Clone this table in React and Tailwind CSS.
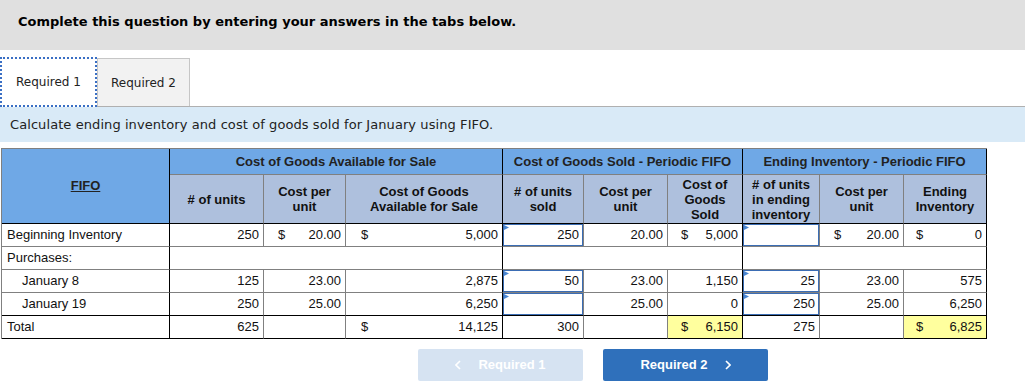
import React from "react";

function Cell({ r = "g", b = "g", className = "", children }) {
  const rc = r === "k" ? "border-r-black" : "border-r-[#808080]";
  const bc = b === "k" ? "border-b-black" : "border-b-[#808080]";
  return (
    <div className={`border-r border-b ${rc} ${bc} ${className}`}>{children}</div>
  );
}

function Tri() {
  return (
    <svg className="absolute left-0 top-0" width="6" height="6" viewBox="0 0 6 6">
      <polygon points="0,0 5,2.5 0,5" fill="#4a86d1" />
    </svg>
  );
}

function InputBox({ value }) {
  return (
    <div className="relative h-full w-full border border-[#3b6db4] flex items-center justify-end pr-[3px]">
      <Tri />
      {value}
    </div>
  );
}

function Money({ value, pl = "pl-[14px]" }) {
  return (
    <div className={`h-full flex items-center justify-between ${pl} pr-[4px]`}>
      <span>$</span>
      <span>{value}</span>
    </div>
  );
}

function Num({ value }) {
  return <div className="h-full flex items-center justify-end pr-[4px]">{value}</div>;
}

function Label({ children, indent }) {
  return (
    <div className={`h-full flex items-center ${indent ? "pl-[20px]" : "pl-[5px]"}`}>{children}</div>
  );
}

function H2({ children, r = "g" }) {
  return (
    <Cell r={r} b="k" className="bg-[#aec0dd] flex items-center justify-center text-center font-bold leading-[15px]">
      <div>{children}</div>
    </Cell>
  );
}

export default function App() {
  return (
    <div className="w-[1025px] h-[391px] bg-white overflow-hidden">
      <div
        className="h-[50px] bg-[#e0e0e0] pl-[18px] pb-[7px] flex items-center text-[13px] font-bold text-black"
        style={{ fontFamily: '"DejaVu Sans", Verdana, sans-serif' }}
      >
        Complete this question by entering your answers in the tabs below.
      </div>

      <div
        className="mt-[7px] flex h-[49px] items-start text-[12px] text-[#222]"
        style={{ fontFamily: '"DejaVu Sans", Verdana, sans-serif' }}
      >
        <div className="relative z-10 h-[50px] w-[97px] bg-white border-2 border-dotted border-[#3a6fc4] flex items-center justify-center">
          Required 1
        </div>
        <div className="mt-px h-[48px] w-[93px] bg-[#f2f2f2] border border-b-0 border-[#c6c6c6] flex items-center justify-center">
          Required 2
        </div>
      </div>

      <div
        className="h-[36px] border-t border-[#b0b0b0] bg-[#d9eaf7] pl-[10px] flex items-center text-[13px] tracking-[0.08px] text-[#222]"
        style={{ fontFamily: '"DejaVu Sans", Verdana, sans-serif' }}
      >
        Calculate ending inventory and cost of goods sold for January using FIFO.
      </div>

      <div
        className="mt-[6px] ml-px w-fit border-l border-t border-[#808080] grid grid-cols-[168px_94px_82px_157px_81px_84px_75px_77px_84px_83px] grid-rows-[26px_49px_23px_23px_23px_23px_23px] text-[13px] text-[#111]"
        style={{ fontFamily: '"Liberation Sans", Arial, sans-serif' }}
      >
        {/* header row 1 */}
        <Cell r="k" b="k" className="row-span-2 bg-[#6fa8e6] flex items-center justify-center font-bold text-[#222]">
          <span className="underline">FIFO</span>
        </Cell>
        <Cell r="k" className="col-span-3 bg-[#6fa8e6] flex items-center justify-center font-bold text-[#222]">
          Cost of Goods Available for Sale
        </Cell>
        <Cell r="k" className="col-span-3 bg-[#6fa8e6] flex items-center justify-center font-bold text-[#222]">
          Cost of Goods Sold - Periodic FIFO
        </Cell>
        <Cell r="k" className="col-span-3 bg-[#6fa8e6] flex items-center justify-center font-bold text-[#222]">
          Ending Inventory - Periodic FIFO
        </Cell>

        {/* header row 2 */}
        <H2># of units</H2>
        <H2>Cost per<br />unit</H2>
        <H2 r="k">Cost of Goods<br />Available for Sale</H2>
        <H2># of units<br />sold</H2>
        <H2>Cost per<br />unit</H2>
        <H2 r="k">Cost of<br />Goods<br />Sold</H2>
        <H2># of units<br />in ending<br />inventory</H2>
        <H2>Cost per<br />unit</H2>
        <H2 r="k">Ending<br />Inventory</H2>

        {/* Beginning inventory */}
        <Cell r="k"><Label>Beginning Inventory</Label></Cell>
        <Cell><Num value="250" /></Cell>
        <Cell><Money value="20.00" /></Cell>
        <Cell r="k"><Money value="5,000" pl="pl-[15px]" /></Cell>
        <Cell><InputBox value="250" /></Cell>
        <Cell><Num value="20.00" /></Cell>
        <Cell r="k"><Money value="5,000" pl="pl-[13px]" /></Cell>
        <Cell><InputBox value="" /></Cell>
        <Cell><Money value="20.00" /></Cell>
        <Cell r="k"><Money value="0" pl="pl-[12px]" /></Cell>

        {/* Purchases */}
        <Cell r="k"><Label>Purchases:</Label></Cell>
        <Cell r="k" className="col-span-3" />
        <Cell r="k" className="col-span-3" />
        <Cell r="k" className="col-span-3" />

        {/* January 8 */}
        <Cell r="k"><Label indent>January 8</Label></Cell>
        <Cell><Num value="125" /></Cell>
        <Cell><Num value="23.00" /></Cell>
        <Cell r="k"><Num value="2,875" /></Cell>
        <Cell><InputBox value="50" /></Cell>
        <Cell><Num value="23.00" /></Cell>
        <Cell r="k"><Num value="1,150" /></Cell>
        <Cell><InputBox value="25" /></Cell>
        <Cell><Num value="23.00" /></Cell>
        <Cell r="k"><Num value="575" /></Cell>

        {/* January 19 */}
        <Cell r="k" b="k"><Label indent>January 19</Label></Cell>
        <Cell b="k"><Num value="250" /></Cell>
        <Cell b="k"><Num value="25.00" /></Cell>
        <Cell r="k" b="k"><Num value="6,250" /></Cell>
        <Cell b="k"><InputBox value="" /></Cell>
        <Cell b="k"><Num value="25.00" /></Cell>
        <Cell r="k" b="k"><Num value="0" /></Cell>
        <Cell b="k"><InputBox value="250" /></Cell>
        <Cell b="k"><Num value="25.00" /></Cell>
        <Cell r="k" b="k"><Num value="6,250" /></Cell>

        {/* Total */}
        <Cell r="k" b="k"><Label>Total</Label></Cell>
        <Cell b="k"><Num value="625" /></Cell>
        <Cell b="k" />
        <Cell r="k" b="k"><Money value="14,125" pl="pl-[15px]" /></Cell>
        <Cell b="k"><Num value="300" /></Cell>
        <Cell b="k" />
        <Cell r="k" b="k" className="bg-[#ffff9e]"><Money value="6,150" pl="pl-[13px]" /></Cell>
        <Cell b="k"><Num value="275" /></Cell>
        <Cell b="k" />
        <Cell r="k" b="k" className="bg-[#ffff9e]"><Money value="6,825" pl="pl-[12px]" /></Cell>
      </div>

      <div
        className="mt-[10px] pl-[418px] flex gap-[20px] text-[13px] font-bold text-white"
        style={{ fontFamily: '"Liberation Sans", Arial, sans-serif' }}
      >
        <div className="w-[165px] h-[32px] rounded-[2px] bg-[#d6e3f2] flex items-center justify-center gap-[17px]">
          <svg width="6" height="10" viewBox="0 0 6 10">
            <polyline points="5,1 1,5 5,9" fill="none" stroke="white" strokeWidth="1.6" />
          </svg>
          <span>Required 1</span>
        </div>
        <div className="w-[165px] h-[32px] rounded-[2px] bg-[#2f70bb] flex items-center justify-center gap-[17px]">
          <span>Required 2</span>
          <svg width="6" height="10" viewBox="0 0 6 10">
            <polyline points="1,1 5,5 1,9" fill="none" stroke="white" strokeWidth="1.6" />
          </svg>
        </div>
      </div>
    </div>
  );
}
